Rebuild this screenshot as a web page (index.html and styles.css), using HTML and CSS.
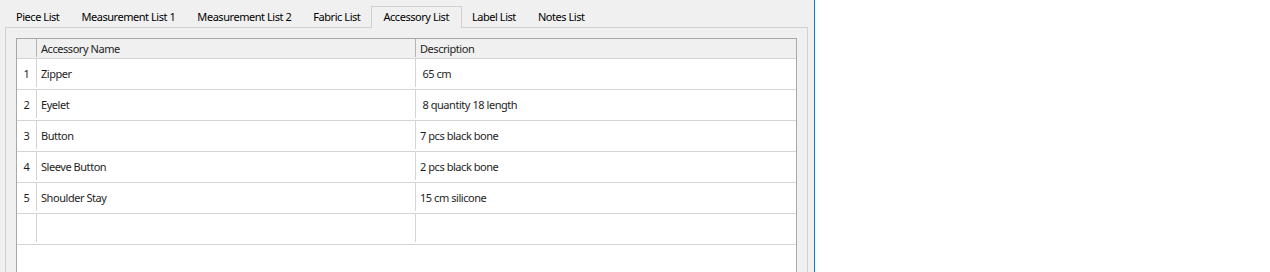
FILE: index.html
```html
<!DOCTYPE html>
<html lang="en">
<head>
<meta charset="UTF-8">
<title>Accessory List</title>
<link rel="stylesheet" href="styles.css">
</head>
<body>
<div class="window">
  <div class="panel">
    <div class="tab-bar">
      <div class="tab">Piece List</div>
      <div class="tab">Measurement List 1</div>
      <div class="tab">Measurement List 2</div>
      <div class="tab">Fabric List</div>
      <div class="tab active">Accessory List</div>
      <div class="tab">Label List</div>
      <div class="tab">Notes List</div>
    </div>
    <div class="tab-pane">
      <div class="grid">
        <div class="row header">
          <div class="cell num"></div>
          <div class="cell">Accessory Name</div>
          <div class="cell last">Description</div>
        </div>
        <div class="row">
          <div class="cell num">1</div>
          <div class="cell">Zipper</div>
          <div class="cell last">&nbsp;65 cm</div>
        </div>
        <div class="row">
          <div class="cell num">2</div>
          <div class="cell">Eyelet</div>
          <div class="cell last">&nbsp;8 quantity 18 length</div>
        </div>
        <div class="row">
          <div class="cell num">3</div>
          <div class="cell">Button</div>
          <div class="cell last">7 pcs black bone</div>
        </div>
        <div class="row">
          <div class="cell num">4</div>
          <div class="cell">Sleeve Button</div>
          <div class="cell last">2 pcs black bone</div>
        </div>
        <div class="row">
          <div class="cell num">5</div>
          <div class="cell">Shoulder Stay</div>
          <div class="cell last">15 cm silicone</div>
        </div>
        <div class="row">
          <div class="cell num"></div>
          <div class="cell"></div>
          <div class="cell last"></div>
        </div>
      </div>
    </div>
  </div>
  <div class="outside"></div>
</div>
</body>
</html>
```

FILE: styles.css
```css
body {
  margin: 0;
  background: #fff;
  overflow: hidden;
  font-family: "Noto Sans", sans-serif;
  font-size: 11px;
  letter-spacing: -0.45px;
  color: #1e1e1e;
}

.window {
  display: flex;
  height: 272px;
}

.panel {
  width: 815px;
  background: #f0f0f0;
  border-right: 1px solid #0078d7;
  box-sizing: border-box;
}

.outside {
  flex: 1;
  background: #fff;
}

/* tabs */
.tab-bar {
  display: flex;
  padding: 6px 0 0 5px;
  height: 21px;
}

.tab {
  padding: 0 10px;
  line-height: 19px;
  border: 1px solid transparent;
  border-bottom: none;
  color: #000;
}

.tab.active {
  border-color: #d0d0d0;
  background: #f0f0f0;
  position: relative;
  z-index: 1;
  height: 22px;
  box-sizing: border-box;
  padding: 0 12px 0 11px;
  margin-right: -1px;
}

.tab-pane {
  margin-left: 5px;
  width: 803px;
  height: 250px;
  border: 1px solid #d0d0d0;
  box-sizing: border-box;
  padding: 10px;
}

/* table */
.grid {
  background: #fff;
  border: 1px solid #a8a8a8;
  border-bottom: none;
  height: 240px;
}

.row {
  display: grid;
  grid-template-columns: 20px 379px 1fr;
  height: 31px;
  border-bottom: 1px solid #d4d4d4;
  box-sizing: border-box;
  padding-bottom: 2px;
}

.row.header {
  height: 20px;
  background: #f0f0f0;
  padding-bottom: 1px;
}

.row.header .cell {
  border-right-color: #b4b4b4;
}

.cell {
  border-right: 1px solid #d4d4d4;
  padding-left: 4px;
  display: flex;
  align-items: center;
  white-space: pre;
}

.cell.last {
  border-right: none;
}

.cell.num {
  padding: 0;
  justify-content: center;
}
```
